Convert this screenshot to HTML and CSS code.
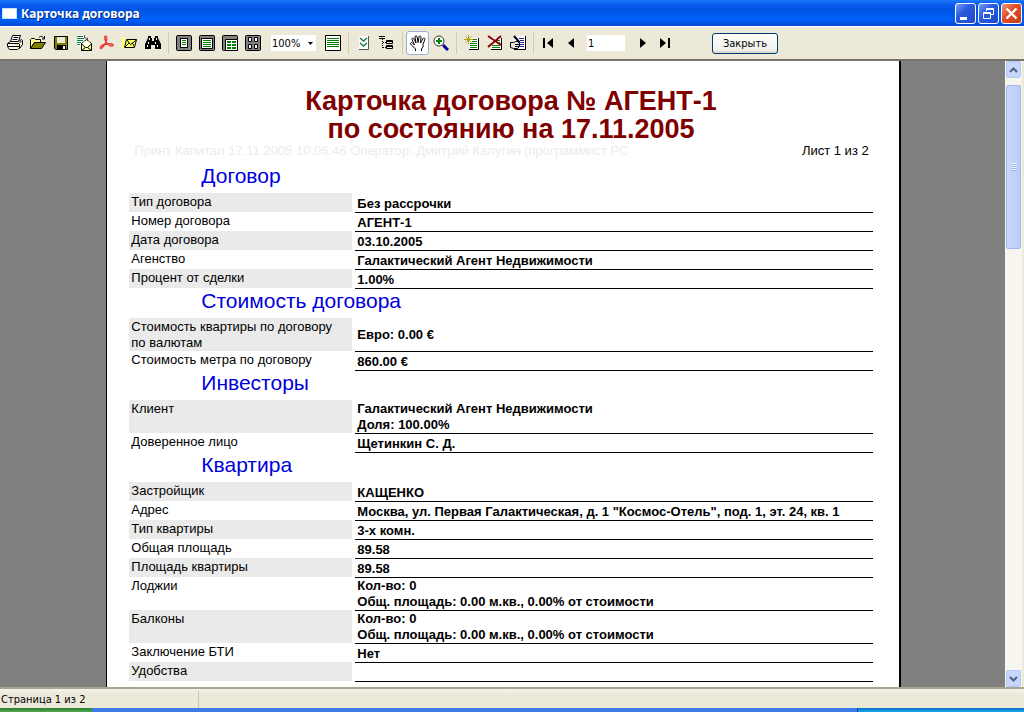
FILE: index.html
```
<!DOCTYPE html>
<html lang="ru">
<head>
    <meta charset="UTF-8">
    <meta name="viewport" content="width=device-width, initial-scale=1.0">
    <title>Карточка договора</title>
    <link rel="stylesheet" href="styles.css">
</head>
<body>
    <!-- Title bar -->
    <header class="title-bar">
        <span class="window-icon"></span>
        <h1 class="window-title">Карточка договора</h1>
        <div class="window-buttons">
            <button class="window-button" aria-label="Свернуть">
                <svg width="19" height="19" viewBox="0 0 19 19"><path d="M4 13h7v3H4z" fill="#fff"/></svg>
            </button>
            <button class="window-button" aria-label="Восстановить">
                <svg width="19" height="19" viewBox="0 0 19 19" fill="none" stroke="#fff"><path d="M7.500 7V4.500h7v6H12M7 5.500h8M4.500 8.500h7v6h-7zM4 9.500h8"/></svg>
            </button>
            <button class="window-button close" aria-label="Закрыть окно">
                <svg width="19" height="19" viewBox="0 0 19 19" fill="none" stroke="#fff" stroke-width="2.400"><path d="M4.500 4.500l10 10M14.500 4.500l-10 10"/></svg>
            </button>
        </div>
    </header>

    <!-- Toolbar -->
    <div class="toolbar">
        <div class="tool-group">
            <button class="tool" aria-label="Печать">
                <svg width="16" height="16" viewBox="0 0 16 16"><path d="M5.500.5h8l-2 6h-8z" fill="#fff" stroke="#000"/><path d="M6.500 2.500h5M5.500 4.500h5" stroke="#000"/><path d="M.5 8.500l3-2h8l3-2 1 1v4l-3 4h-1l-1 1h-8l-2-3z" fill="#fff" stroke="#000"/><path d="M1 8.500h11l3-3M12.500 9v4M1 11.500h11" fill="none" stroke="#000"/><path d="M8 10h3" stroke="#e0d000"/></svg>
            </button>
            <button class="tool" aria-label="Открыть">
                <svg width="16" height="16" viewBox="0 0 16 16"><path d="M.5 13.500v-9l1-1h3l1 1h5v3h-6z" fill="#ffff9c" stroke="#000"/><path d="M.5 13.500l4-6h11l-4 6z" fill="#808000" stroke="#000"/><path d="M9 2.500c2-2 4-1 5 1M14.500 1v3H12" fill="none" stroke="#000"/></svg>
            </button>
            <button class="tool" aria-label="Сохранить">
                <svg width="16" height="16" viewBox="0 0 16 16"><path d="M1.500 1.500h13v13h-12l-1-1z" fill="#808000" stroke="#000"/><path d="M4 2h8v6H4z" fill="#ece9d8"/><path d="M4 10h9v5H4z" fill="#000"/><path d="M10 11h2v3h-2z" fill="#fff"/></svg>
            </button>
            <button class="tool" aria-label="Отправить по почте">
                <svg width="16" height="16" viewBox="0 0 16 16"><path d="M1 0h8l2 2v9H1z" fill="#fff"/><path d="M1 1.500h6M1 3.500h7M1 5.500h6M1 7.500h4M1 9.500h3" stroke="#008040"/><path d="M8.500 0v3h3v2" fill="none" stroke="#555"/><path d="M5.500 8.500l5-4 5 4v7h-10z" fill="#ffff9c" stroke="#000"/><path d="M7.500 9V6.500h6V9l-3 3z" fill="#fff"/><path d="M5.500 9l4 3.500h2l4-3.500M5.500 15.500l4-3M15.500 15.500l-4-3" fill="none" stroke="#000"/></svg>
            </button>
            <button class="tool" aria-label="Экспорт в PDF">
                <svg width="16" height="16" viewBox="0 0 16 16" fill="none" stroke="#e83c38" stroke-width="1.500"><path d="M6.500 1c1.500 0 1.500 3 .5 6-1.500 3-3.500 6-5 6.500-1.500-.5-.5-3 4-4.200 3.500-.8 7-.8 8 .5.500 1.700-2.500 1.500-4 .2C8 8.500 6 5 5.700 3c0-1 0-2 .8-2z"/></svg>
            </button>
            <button class="tool" aria-label="Письмо">
                <svg width="16" height="16" viewBox="0 0 16 16"><path d="M0 2h3v11H0z" fill="#ffff80"/><path d="M2.500 12.500l2-8h10l-2 8z" fill="#ffff60" stroke="#000"/><path d="M5 5l3.500 4.500 6-4.500M3 12l4-4M12.500 12l-2-4" fill="none" stroke="#000"/></svg>
            </button>
            <button class="tool" aria-label="Найти">
                <svg width="16" height="16" viewBox="0 0 16 16"><path d="M3 1h3v2h1v3h2V3h1V1h3v2l3 6v5h-6v-4H6v4H0V9l3-6z" fill="#000"/><path d="M4.500 3v2M11.500 3v2M3.500 7v2M10.500 7v2M2.500 10v2M12.500 10v2" stroke="#fff"/></svg>
            </button>
        </div>
        <span class="separator"></span>
        <div class="tool-group">
            <button class="tool" aria-label="Страница целиком">
                <svg width="16" height="16" viewBox="0 0 16 16"><rect x=".5" y=".5" width="15" height="15" rx="1" fill="#808080" stroke="#000"/><path d="M4.500 3.500h7v9h-7z" fill="#fff" stroke="#000"/><path d="M6 5.500h4M6 7.500h4M6 9.500h4" stroke="#008000"/></svg>
            </button>
            <button class="tool" aria-label="По ширине">
                <svg width="16" height="16" viewBox="0 0 16 16"><rect x=".5" y=".5" width="15" height="15" rx="1" fill="#808080" stroke="#000"/><path d="M2.500 3.500h11v10h-11z" fill="#fff" stroke="#000"/><path d="M4 5.500h8M4 7.500h8M4 9.500h8M4 11.500h8" stroke="#008000"/></svg>
            </button>
            <button class="tool" aria-label="Две страницы">
                <svg width="16" height="16" viewBox="0 0 16 16"><rect x=".5" y=".5" width="15" height="15" rx="1" fill="#808080" stroke="#000"/><path d="M3.500 4.500h12v11h-12z" fill="#fff" stroke="#000"/><path d="M5 7h4M10 7h4M5 10h4M10 10h4M5 13h4M10 13h4" stroke="#008000" stroke-width="2"/></svg>
            </button>
            <button class="tool" aria-label="Несколько страниц">
                <svg width="16" height="16" viewBox="0 0 16 16"><rect x=".5" y=".5" width="15" height="15" rx="1" fill="#808080" stroke="#000"/><path d="M3.500 2.500h3v4h-3zM9.500 2.500h3v4h-3zM3.500 9.500h3v4h-3zM9.500 9.500h3v4h-3z" fill="#fff" stroke="#000"/></svg>
            </button>
        </div>
        <div class="zoom">
            <select class="zoom-select" aria-label="Масштаб">
                <option>100%</option>
                <option>200%</option>
            </select>
            <svg class="zoom-arrow" width="5" height="3" viewBox="0 0 5 3"><path d="M0 0h5L2.500 3z"/></svg>
        </div>
        <div class="tool-group">
            <button class="tool" aria-label="Весь экран">
                <svg width="16" height="16" viewBox="0 0 16 16"><path d="M.5.5h15v15H.5z" fill="#fff" stroke="#000"/><path d="M2 3.500h12M2 5.500h12M2 7.500h12M2 9.500h12M2 11.500h12" stroke="#008000"/></svg>
            </button>
        </div>
        <span class="separator"></span>
        <div class="tool-group">
            <button class="tool" aria-label="Параметры страницы">
                <svg width="16" height="16" viewBox="0 0 16 16"><path d="M3 1h9v13H3z" fill="#fff"/><path d="M12.500 1v13.500H3" fill="none" stroke="#555"/><path d="M4 3l3.500 3L11 3M4 8l3.500 3L11 8" fill="none" stroke="#20784c" stroke-width="1.500"/></svg>
            </button>
            <button class="tool" aria-label="Структура">
                <svg width="16" height="16" viewBox="0 0 16 16" fill="none" stroke="#000"><path d="M3.500 4v9M4 7.500h3M4 12.500h3" stroke-dasharray="1 1"/><path d="M0 1.500h6M0 3.500h6M7.500 5.500h6v3h-6zM7.500 10.500h6v3h-6zM8 6.500h5M8 11.500h5"/></svg>
            </button>
        </div>
        <span class="separator"></span>
        <div class="tool-group">
            <button class="tool active" aria-label="Рука" aria-pressed="true">
                <svg width="18" height="18" viewBox="0 0 18 18"><path d="M6.500 17v-2L3.500 12 1.500 10C1 8.500 3 8 4 9.500L5.500 11 3 5.500C2.500 4 4.500 3.500 5 5l2 4-1-6C6 1.500 8 1.500 8.200 3L9 8.500 10 3c.2-1.500 2.200-1.300 2 .2L11.500 9 14 4.500c.7-1.300 2.300-.5 1.800 1L14 10.500V13l-1.500 2v2" fill="#fff" stroke="#000"/></svg>
            </button>
            <button class="tool" aria-label="Лупа">
                <svg width="16" height="16" viewBox="0 0 16 16"><path d="M10 10l5 5" stroke="#0000a0" stroke-width="3"/><circle cx="6" cy="6" r="5" fill="#fff" stroke="#333"/><path d="M6 3v6M3 6h6" stroke="#008000" stroke-width="2"/></svg>
            </button>
        </div>
        <span class="separator"></span>
        <div class="tool-group">
            <button class="tool" aria-label="Новая страница">
                <svg width="16" height="16" viewBox="0 0 16 16"><path d="M5 3h9v11H5z" fill="#fff"/><path d="M14.500 3v11.500H5" fill="none" stroke="#000"/><path d="M9 4.500h4M8 6.500h5M6 8.500h7M6 10.500h7M6 12.500h7" stroke="#008000"/><path d="M4.500 0v9M0 4.500h9M1.500 1.500l6 6M7.500 1.500l-6 6" stroke="#b0a010"/></svg>
            </button>
            <button class="tool" aria-label="Удалить страницу">
                <svg width="16" height="16" viewBox="0 0 16 16"><path d="M4 3h10v11H4z" fill="#fff"/><path d="M14.500 3v11.500H4" fill="none" stroke="#000"/><path d="M8 5.500h5M9 7.500h4M5 10.500h8M5 12.500h8" stroke="#008000"/><path d="M1 1l13 9M14 1L1 12" stroke="#900000" stroke-width="2"/></svg>
            </button>
            <button class="tool" aria-label="Редактировать страницу">
                <svg width="16" height="16" viewBox="0 0 16 16"><path d="M4 1h11v13H4z" fill="#fff"/><path d="M15.500 1v13.500H4" fill="none" stroke="#000"/><path d="M9 3.500h5M10 5.500h4M11 7.500h3M10 9.500h4M9 11.500h5" stroke="#2020a0"/><path d="M.5 7.500h3l2-1h4v5l-2 2h-4l-3-1z" fill="#e4e4e4" stroke="#000"/><path d="M4 1l6 7" stroke="#000" stroke-width="2"/><path d="M5 9.500h4M5 11.500h4" stroke="#000"/></svg>
            </button>
        </div>
        <span class="separator"></span>
        <div class="tool-group">
            <button class="tool" aria-label="Первая страница">
                <svg width="16" height="16" viewBox="0 0 16 16"><path d="M2 3h2v10H2zM12 3v10L6 8z"/></svg>
            </button>
            <button class="tool" aria-label="Предыдущая страница">
                <svg width="16" height="16" viewBox="0 0 16 16"><path d="M10 3v10L4 8z"/></svg>
            </button>
        </div>
        <input class="page-number" type="text" value="1" aria-label="Номер страницы">
        <div class="tool-group">
            <button class="tool" aria-label="Следующая страница">
                <svg width="16" height="16" viewBox="0 0 16 16"><path d="M5 3v10l6-5z"/></svg>
            </button>
            <button class="tool" aria-label="Последняя страница">
                <svg width="16" height="16" viewBox="0 0 16 16"><path d="M2 3v10l6-5zM10 3h2v10h-2z"/></svg>
            </button>
        </div>
        <button class="close-report">Закрыть</button>
    </div>

    <!-- Report -->
    <main class="viewer">
        <div class="desk">
            <article class="sheet">
                <h2 class="report-title">Карточка договора № АГЕНТ-1<br>по состоянию на 17.11.2005</h2>
                <div class="print-info">
                    <span class="stamp">Принт Капитал 17.11.2005 10:06:46 Оператор: Дмитрий Калугин (программист РС</span>
                    <span>Лист 1 из 2</span>
                </div>

                <h3 class="first">Договор</h3>
                <table>
                    <tr><th>Тип договора</th><td>Без рассрочки</td></tr>
                    <tr><th>Номер договора</th><td>АГЕНТ-1</td></tr>
                    <tr><th>Дата договора</th><td>03.10.2005</td></tr>
                    <tr><th>Агенство</th><td>Галактический Агент Недвижимости</td></tr>
                    <tr><th>Процент от сделки</th><td>1.00%</td></tr>
                </table>

                <h3>Стоимость договора</h3>
                <table>
                    <tr class="tall"><th>Стоимость квартиры по договору<br>по валютам</th><td>Евро: 0.00 €</td></tr>
                    <tr><th>Стоимость метра по договору</th><td>860.00 €</td></tr>
                </table>

                <h3>Инвесторы</h3>
                <table>
                    <tr class="tall"><th>Клиент</th><td>Галактический Агент Недвижимости<br>Доля: 100.00%</td></tr>
                    <tr><th>Доверенное лицо</th><td>Щетинкин С. Д.</td></tr>
                </table>

                <h3>Квартира</h3>
                <table>
                    <tr><th>Застройщик</th><td>КАЩЕНКО</td></tr>
                    <tr><th>Адрес</th><td>Москва, ул. Первая Галактическая, д. 1 "Космос-Отель", под. 1, эт. 24, кв. 1</td></tr>
                    <tr><th>Тип квартиры</th><td>3-х комн.</td></tr>
                    <tr><th>Общая площадь</th><td>89.58</td></tr>
                    <tr><th>Площадь квартиры</th><td>89.58</td></tr>
                    <tr class="tall"><th>Лоджии</th><td>Кол-во: 0<br>Общ. площадь: 0.00 м.кв., 0.00% от стоимости</td></tr>
                    <tr class="tall"><th>Балконы</th><td>Кол-во: 0<br>Общ. площадь: 0.00 м.кв., 0.00% от стоимости</td></tr>
                    <tr><th>Заключение БТИ</th><td>Нет</td></tr>
                    <tr><th>Удобства</th><td></td></tr>
                </table>
            </article>
        </div>
        <div class="scrollbar">
            <button class="scroll-button" aria-label="Вверх">
                <svg width="9" height="6" viewBox="0 0 9 6" fill="none" stroke="#4d6185" stroke-width="2"><path d="M1 5l3.500-3.500L8 5"/></svg>
            </button>
            <div class="scroll-track">
                <div class="scroll-thumb"><span class="grip"></span></div>
            </div>
            <button class="scroll-button" aria-label="Вниз">
                <svg width="9" height="6" viewBox="0 0 9 6" fill="none" stroke="#4d6185" stroke-width="2"><path d="M1 1l3.500 3.500L8 1"/></svg>
            </button>
        </div>
    </main>

    <!-- Status bar and the edge of the taskbar -->
    <footer class="status-bar">
        <span class="status-page">Страница 1 из 2</span>
    </footer>
    <div class="taskbar">
        <span class="start"></span>
        <span class="tray"></span>
    </div>
</body>
</html>
```
FILE: styles.css
```
* {
    box-sizing: border-box;
    margin: 0;
    padding: 0;
}

body {
    display: flex;
    flex-direction: column;
    height: 100vh;
    overflow: hidden;
    background-color: #ece9d8;
    font-family: "DejaVu Sans Condensed", "Liberation Sans", sans-serif;
    font-size: 11px;
    color: #000;
}

button {
    display: flex;
    justify-content: center;
    align-items: center;
    border: none;
    background: none;
    font: inherit;
}

/* Title bar */
.title-bar {
    display: flex;
    align-items: center;
    flex-shrink: 0;
    height: 26px;
    padding: 0 2px;
    background: linear-gradient(#1c7cf8 0, #0a5cf0 4px, #0054e3 10px, #0060fa 20px, #0048d0 26px);
}

.window-icon {
    width: 15px;
    height: 11px;
    background-color: #fff;
    border: 1px solid #c8dcff;
}

.window-title {
    flex: 1;
    margin-left: 4px;
    font-family: "Noto Sans", sans-serif;
    font-size: 12px;
    font-weight: bold;
    color: #fff;
    text-shadow: 1px 1px #0a2a80;
}

.window-buttons {
    display: flex;
    gap: 2px;
}

.window-button {
    width: 21px;
    height: 21px;
    border: 1px solid #fff;
    border-radius: 3px;
    background: linear-gradient(135deg, #7aa0f4, #2a5ce0 40%, #1e48c8);
}

.window-button.close {
    background: linear-gradient(135deg, #f09a80, #e0502c 40%, #c83c18);
}

/* Toolbar */
.toolbar {
    display: flex;
    align-items: center;
    flex-shrink: 0;
    height: 35px;
    padding-left: 3px;
    border-top: 1px solid #fff;
    border-bottom: 2px solid #77756b;
}

.tool-group {
    display: flex;
}

.tool {
    width: 23px;
    height: 24px;
}

.tool.active {
    background-color: #fff;
    border: 1px solid #98b0d0;
    border-radius: 3px;
}

.separator {
    width: 1px;
    height: 22px;
    margin: 0 3px 0 4px;
    background-color: #d0ccb8;
}

.zoom {
    position: relative;
    margin: 0 5px 0 7px;
}

.zoom-select {
    display: block;
    width: 45px;
    height: 16px;
    padding-left: 1px;
    border: none;
    background-color: #fff;
    font: inherit;
    appearance: none;
}

.zoom-arrow {
    position: absolute;
    top: 7px;
    right: 3px;
    pointer-events: none;
}

.page-number {
    width: 38px;
    height: 16px;
    margin: 0 6px 0 4px;
    padding-left: 1px;
    border: none;
    background-color: #fff;
    font: inherit;
}

.close-report {
    width: 66px;
    height: 21px;
    margin-left: 35px;
    border: 1px solid #003c74;
    border-radius: 3px;
    background: linear-gradient(#fff, #f0f0ea 85%, #d6d0c5);
}

/* Report */
.viewer {
    display: flex;
    flex: 1;
    min-height: 0;
    padding-right: 2px;
}

.desk {
    display: flex;
    justify-content: center;
    flex: 1;
    overflow: hidden;
    padding-left: 2px;
    background-color: #808080;
}

.sheet {
    width: 79.2%;
    padding: 26px 26px 0 22px;
    border-left: 1px solid #000;
    border-right: 2px solid #000;
    background-color: #fff;
    font-family: "Liberation Sans", Arial, sans-serif;
    font-size: 13px;
    line-height: 16px;
}

.report-title {
    padding-left: 20px;
    font-size: 27px;
    line-height: 28px;
    text-align: center;
    color: #800000;
}

.print-info {
    display: flex;
    justify-content: space-between;
    padding: 0 4px 0 5px;
}

.stamp {
    color: #ececec;
}

h3 {
    height: 30px;
    padding-left: 72px;
    font-size: 21px;
    font-weight: normal;
    line-height: 26px;
    color: #0000dc;
}

h3.first {
    margin-top: 4px;
}

table {
    width: 100%;
    border-spacing: 0;
}

th, td {
    height: 19px;
    text-align: left;
}

th {
    width: 226px;
    padding: 1px 0 0 2px;
    border-right: 3px solid #fff;
    font-weight: normal;
    vertical-align: top;
}

tr:nth-child(odd) th {
    background-color: #eaeaea;
}

td {
    padding: 3px 0 0 2px;
    font-weight: bold;
    box-shadow: 0 1px #000;
}

.tall th, .tall td {
    height: 33px;
}

.tall td {
    padding-top: 1px;
}

/* Scrollbar */
.scrollbar {
    display: flex;
    flex-direction: column;
    width: 17px;
    padding: 0 1px;
    background-color: #f6f5f0;
}

.scroll-button {
    height: 17px;
    border: 1px solid #b4c8f6;
    border-radius: 2px;
    background-color: #c8d6fb;
}

.scroll-track {
    flex: 1;
    padding-top: 7px;
}

.scroll-thumb {
    display: flex;
    justify-content: center;
    align-items: center;
    height: 28%;
    border: 1px solid #a0b8f0;
    border-radius: 2px;
    background: linear-gradient(to right, #cad8fd, #b8ccfa);
}

.grip {
    width: 6px;
    height: 8px;
    background: repeating-linear-gradient(#eef4fe 0, #eef4fe 1px, #9cb4ec 1px, #9cb4ec 2px);
}

/* Status bar */
.status-bar {
    display: flex;
    align-items: center;
    flex-shrink: 0;
    height: 21px;
    padding-top: 2px;
    border-top: 2px solid #a8a594;
    background: linear-gradient(#f4f2e8, #ece9d8 6px);
}

.status-page {
    width: 199px;
    padding: 2px 0 2px 1px;
    border-right: 1px solid #c8c4b0;
}

.taskbar {
    display: flex;
    justify-content: space-between;
    flex-shrink: 0;
    height: 4px;
    background-color: #3c7ce8;
}

.start {
    width: 9%;
    background: linear-gradient(#2c7c2c, #50a850);
}

.tray {
    width: 167px;
    border-left: 1px solid #0a4a9c;
    background: linear-gradient(#0c70c0, #18a8f0);
}
```
